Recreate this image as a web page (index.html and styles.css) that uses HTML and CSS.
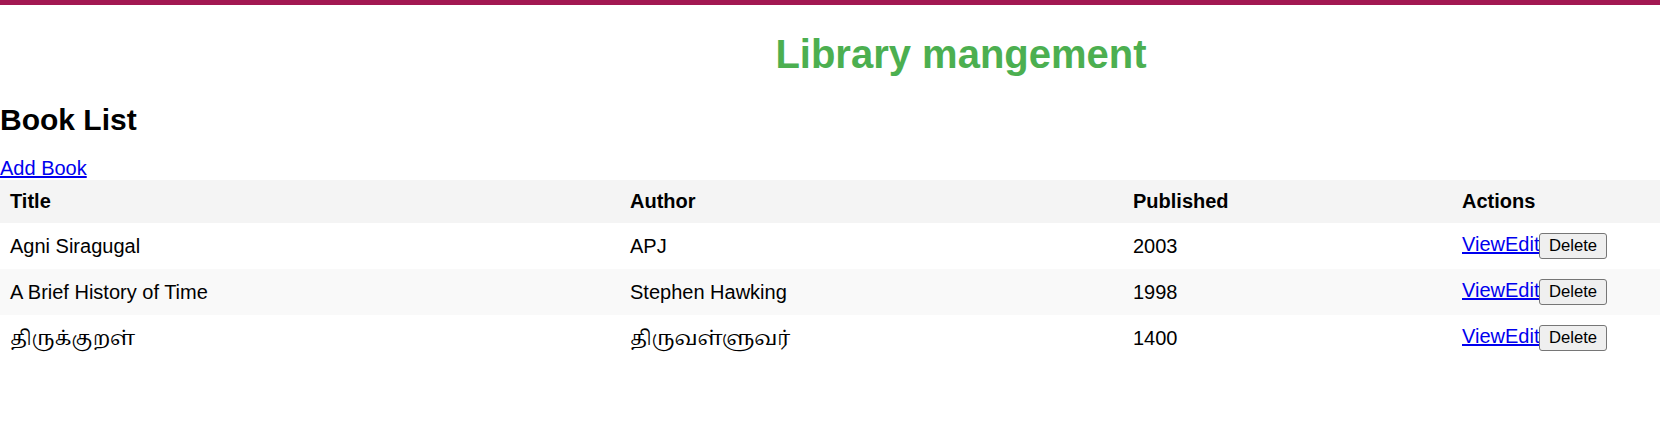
FILE: index.html
```html
<!DOCTYPE html>
<html lang="en">
<head>
<meta charset="utf-8">
<title>Library mangement</title>
<link rel="stylesheet" href="styles.css">
</head>
<body>
<div class="topbar"></div>
<header class="site-header">
  <h1 class="site-title">Library mangement</h1>
</header>
<main class="content">
  <h2 class="page-title">Book List</h2>
  <a class="link" href="#">Add Book</a>
  <table class="books">
    <thead>
      <tr>
        <th class="col-title">Title</th>
        <th class="col-author">Author</th>
        <th class="col-year">Published</th>
        <th class="col-actions">Actions</th>
      </tr>
    </thead>
    <tbody>
      <tr>
        <td>Agni Siragugal</td>
        <td>APJ</td>
        <td>2003</td>
        <td class="actions"><a class="link" href="#">View</a><a class="link" href="#">Edit</a><button class="btn">Delete</button></td>
      </tr>
      <tr>
        <td>A Brief History of Time</td>
        <td>Stephen Hawking</td>
        <td>1998</td>
        <td class="actions"><a class="link" href="#">View</a><a class="link" href="#">Edit</a><button class="btn">Delete</button></td>
      </tr>
      <tr>
        <td class="tamil">திருக்குறள்</td>
        <td class="tamil">திருவள்ளுவர்</td>
        <td>1400</td>
        <td class="actions"><a class="link" href="#">View</a><a class="link" href="#">Edit</a><button class="btn">Delete</button></td>
      </tr>
    </tbody>
  </table>
</main>
</body>
</html>
```

FILE: styles.css
```css
html, body {
  margin: 0;
  padding: 0;
  background: #ffffff;
}

body {
  font-family: "Liberation Sans", Arial, sans-serif;
  font-size: 20px;
  color: #000;
}

.topbar {
  height: 4.5px;
  background: #a21852;
}

.site-header {
  padding-left: 262px;
  text-align: center;
}

.site-title {
  margin: 27px 0 26px;
  font-size: 40px;
  font-weight: bold;
  color: #4caf50;
}

.page-title {
  margin: 0 0 20.5px;
  font-size: 30px;
  font-weight: bold;
}

.link {
  color: #0000ee;
  text-decoration: underline;
}

.books {
  width: 100%;
  border-collapse: collapse;
  table-layout: fixed;
}

.books th,
.books td {
  box-sizing: border-box;
  padding: 10px;
  text-align: left;
}

.books th {
  background: #f4f4f4;
  font-weight: bold;
}

.books tbody tr:nth-child(even) {
  background: #f9f9f9;
}

.col-title { width: 620px; }
.col-author { width: 503px; }
.col-year { width: 329px; }

.actions {
  white-space: nowrap;
}

.tamil {
  font-family: "Liberation Sans", "Noto Serif Tamil", "Noto Sans Tamil", "Lohit Tamil", serif;
  font-size: 20px;
  line-height: 23px;
}

.btn {
  margin: 0;
  padding: 2px 8.5px;
  font-family: "Liberation Sans", Arial, sans-serif;
  font-size: 16.67px;
  color: #000;
  background: #efefef;
  border: 1px solid #767676;
  border-radius: 3px;
}
```
